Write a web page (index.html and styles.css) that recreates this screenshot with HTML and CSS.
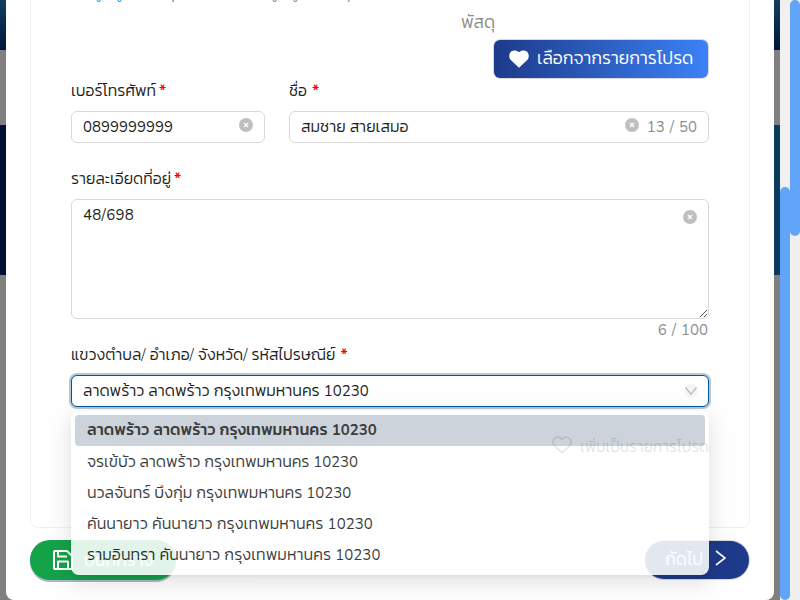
FILE: index.html
```html
<!DOCTYPE html>
<html lang="th">
<head>
<meta charset="utf-8">
<title>ข้อมูลผู้ส่งพัสดุ</title>
<link rel="stylesheet" href="styles.css">
</head>
<body>
<div class="screen">
  <div class="backdrop">
    <main class="modal">
      <section class="card">
        <div class="steps">
          <span class="step step-active">ข้อมูลผู้ส่งพัสดุ</span>
          <span class="step">ข้อมูลผู้รับพัสดุ</span>
        </div>
        <div class="step-wrap">พัสดุ</div>
        <div class="fav-row">
          <button class="fav-button">
            <svg width="20" height="18" viewBox="0 0 20 18"><path fill="#fff" d="M10 17.700 1.800 10.100C-.5 7.700-.1 3.600 2.100 1.600 4.500-.3 7.600.1 10 2.200c2.400-2.100 5.500-2.500 7.900-.6 2.200 2 2.600 6.100.3 8.500z"/></svg>
            <span>เลือกจากรายการโปรด</span>
          </button>
        </div>
        <div class="fields">
          <div class="field phone">
            <label><span>เบอร์โทรศัพท์</span><i>*</i></label>
            <div class="input"><span class="value num">0899999999</span><svg class="clear" viewBox="0 0 14 14"><circle cx="7" cy="7" r="7"/><path d="m5 5 4 4m0-4-4 4"/></svg></div>
          </div>
          <div class="field name">
            <label><span>ชื่อ</span><i>*</i></label>
            <div class="input"><span class="value">สมชาย สายเสมอ</span><svg class="clear" viewBox="0 0 14 14"><circle cx="7" cy="7" r="7"/><path d="m5 5 4 4m0-4-4 4"/></svg><span class="count num">13 / 50</span></div>
          </div>
        </div>
        <div class="field address">
          <label><span>รายละเอียดที่อยู่</span><i>*</i></label>
          <div class="area"><span class="value num detail">48/698</span><svg class="clear" viewBox="0 0 14 14"><circle cx="7" cy="7" r="7"/><path d="m5 5 4 4m0-4-4 4"/></svg><svg class="grip" viewBox="0 0 9 9"><path d="m1 8 7-7M5 8l3-3"/></svg></div>
          <div class="count area-count num">6 / 100</div>
        </div>
        <div class="field region">
          <label><span>แขวงตำบล/ อำเภอ/ จังหวัด/ รหัสไปรษณีย์</span><i>*</i></label>
          <div class="input select"><span class="value">ลาดพร้าว ลาดพร้าว กรุงเทพมหานคร <span class="num">10230</span></span><svg class="arrow" width="14" height="14" viewBox="0 0 14 14"><circle cx="7" cy="7" r="7" fill="#f5f5f5"/><path d="m1.500 3.300 5.500 7 5.500-7" fill="none" stroke="#b5b5b5" stroke-width="1.200"/></svg>
            <ul class="menu">
              <li class="selected">ลาดพร้าว ลาดพร้าว กรุงเทพมหานคร <span class="num">10230</span></li>
              <li class="tight">จรเข้บัว ลาดพร้าว กรุงเทพมหานคร <span class="num">10230</span></li>
              <li>นวลจันทร์ บึงกุ่ม กรุงเทพมหานคร <span class="num">10230</span></li>
              <li class="loose">คันนายาว คันนายาว กรุงเทพมหานคร <span class="num">10230</span></li>
              <li class="loose">รามอินทรา คันนายาว กรุงเทพมหานคร <span class="num">10230</span></li>
            </ul>
          </div>
        </div>
        <div class="add-fav">
          <svg width="20" height="18" viewBox="0 0 20 18"><path fill="none" stroke="#333" stroke-width="1.500" d="M10 16.700 2.200 9.500C.2 7.300.6 4 2.500 2.300 4.800.3 7.800 1 10 3.200 12.200 1 15.200.3 17.500 2.300c1.900 1.700 2.300 5 .3 7.200z"/></svg>
          <span>เพิ่มเป็นรายการโปรด</span>
        </div>
      </section>
      <footer class="actions">
        <button class="save"><svg width="20" height="20" viewBox="0 0 20 20"><path fill="none" stroke="#fff" stroke-width="2" stroke-linejoin="round" d="M2 1h12l5 5v12a1 1 0 0 1-1 1H2a1 1 0 0 1-1-1V2a1 1 0 0 1 1-1zM5 1v5.500h9M5 19v-7.500h10V19"/></svg><span>บันทึกร่าง</span></button>
        <button class="next"><span>ถัดไป</span><svg width="11" height="16" viewBox="0 0 11 16"><path fill="none" stroke="#fff" stroke-width="1.600" d="m1 1 9 7-9 7"/></svg></button>
      </footer>
    </main>
  </div>
  <div class="track"><div class="thumb thumb-inner"></div></div>
  <div class="track"><div class="thumb thumb-outer"></div></div>
</div>
</body>
</html>
```
FILE: styles.css
```css
* { box-sizing: border-box; }
body {
  margin: 0;
  overflow: hidden;
  font-family: "Nunito", "Kanit", "Noto Sans Thai", sans-serif;
  font-size: 16px;
  font-weight: 300;
  line-height: 22px;
  color: #1f1f1f;
}
button { border: 0; padding: 0; font: inherit; color: #fff; white-space: nowrap; }
svg { flex: none; }
.num { font-size: 15px; font-weight: 400; }
.detail { letter-spacing: .3px; }
.screen { display: flex; width: 800px; height: 600px; }
.backdrop {
  width: 780px;
  padding: 0 6px;
  background:
    linear-gradient(#123f5c, #03153a) 0 0 / 780px 50px no-repeat,
    linear-gradient(90deg, #000f33 50%, #0c3a5a 50%) 0 125px / 780px 150px no-repeat,
    #808080;
}
.modal {
  height: 600px;
  padding: 0 24px;
  background: #fff;
  border-radius: 0 0 8px 8px;
  overflow: hidden;
}
.card {
  height: 528px;
  padding: 0 40px;
  border: 1px solid #f0f0f0;
  border-top: 0;
  border-radius: 0 0 8px 8px;
}
.steps { display: flex; height: 2px; padding-left: 1px; overflow: hidden; align-items: flex-end; color: #8c8c8c; font-size: 17px; }
.step { width: 176px; height: 20px; flex: none; }
.step-active { color: #1b9cf0; }
.step-wrap { height: 38px; padding: 9px 0 0 390px; color: #8c8c8c; font-size: 17.5px; }
.fav-row { display: flex; justify-content: flex-end; }
.fav-button {
  display: flex;
  align-items: center;
  gap: 8px;
  width: 214px;
  height: 38px;
  margin-right: 1px;
  padding-left: 15px;
  border-radius: 6px;
  background: linear-gradient(90deg, #1e3a8a, #3b82f6);
  box-shadow: 0 0 0 1px #d9d9d9;
  font-size: 17.7px;
}
.fav-button span { margin-top: -2px; }
.fields { display: flex; gap: 24px; padding-top: 2px; }
.phone { width: 194px; }
.name { flex: 1; }
label { display: flex; gap: 4px; height: 31px; font-size: 15.9px; }
.phone label, .address label { gap: 3px; }
.region label, .name label { gap: 5px; }
label i { color: #ff0000; font-style: normal; font-weight: 700; }
.input {
  position: relative;
  display: flex;
  align-items: center;
  height: 32px;
  padding: 0 11px;
  border: 1px solid #d9d9d9;
  border-radius: 6px;
  background: #fff;
}
.value { margin-right: auto; }
.clear { width: 14px; height: 14px; fill: #bfbfbf; margin-top: -4px; }
.clear path { stroke: #fff; stroke-width: 1.2; }
.count { color: #8c8c8c; word-spacing: 1.1px; }
.name .count { margin-left: 8px; }
.address { padding-top: 25px; }
.area {
  position: relative;
  display: flex;
  height: 120px;
  padding: 4px 11px;
  border: 1px solid #d9d9d9;
  border-radius: 6px;
}
.area .clear { margin-top: 6px; }
.grip { position: absolute; right: 0; bottom: 0; width: 9px; height: 9px; fill: none; stroke: #555; stroke-width: 1; }
.area-count { height: 22px; padding-right: 1px; text-align: right; }
.region { padding-top: 3px; }
.select { border-color: #05569a; box-shadow: 0 0 0 2px #b5c7d1; }
.select .arrow { margin-right: -1px; }
.menu {
  position: absolute;
  z-index: 2;
  top: 35px;
  left: -1px;
  width: 638px;
  height: 164px;
  margin: 0;
  padding: 4px;
  list-style: none;
  border-radius: 8px;
  background: #fff;
  opacity: .88;
  box-shadow: 0 6px 16px rgba(0, 0, 0, .08), 0 3px 6px -4px rgba(0, 0, 0, .12), 0 9px 28px 8px rgba(0, 0, 0, .05);
}
.menu li { height: 31px; padding: 5px 12px; }
.menu .tight { letter-spacing: -.08px; }
.menu .loose { letter-spacing: .06px; }
.menu .selected { padding-top: 4px; border-radius: 4px; background: #c6ced6; font-weight: 500; letter-spacing: .03px; }
.menu .selected .num { font-weight: 700; }
.add-fav { display: flex; justify-content: flex-end; align-items: center; gap: 8px; height: 22px; margin-top: 27px; font-size: 15.5px; }
.add-fav span { margin-top: 3px; }
.actions { display: flex; justify-content: space-between; padding-top: 12px; }
.save, .next { display: flex; align-items: center; font-size: 17.7px; }
.save { width: 146px; height: 40px; padding-left: 23px; gap: 11px; border-radius: 20px; background: #16a34a; box-shadow: 0 2px 0 #a9b9c9; }
.next { width: 104px; height: 38px; margin: 1px 1px 0 0; padding-left: 20px; gap: 12px; border-radius: 20px; background: #1e3a8a; box-shadow: 0 0 0 1px #d9d9d9; }
.next span { margin-top: -2px; }
.next svg { margin-top: -4px; }
.track { width: 10px; background: #f0f0f0; }
.thumb { border-radius: 5px; background: #60a5fa; }
.thumb-inner { height: 413px; margin-top: 187px; }
.thumb-outer { height: 236px; }
```
